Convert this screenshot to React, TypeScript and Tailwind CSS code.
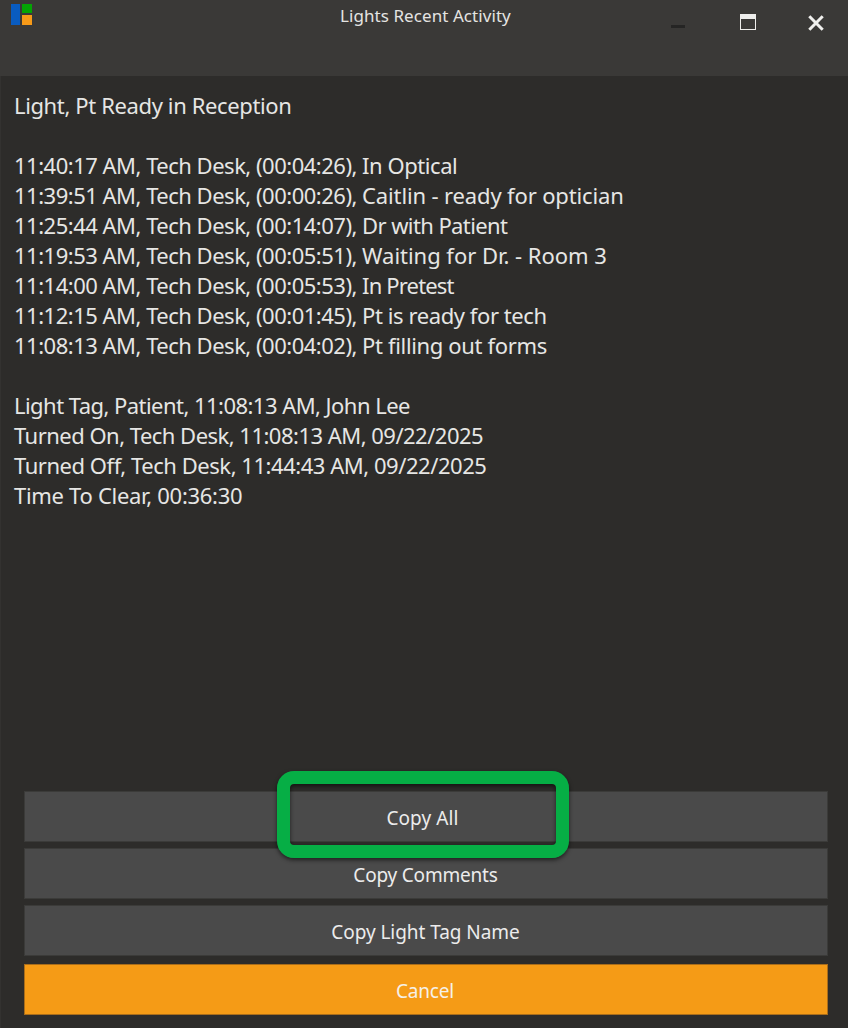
import React from 'react';

const events = [
  { time: '11:40:17 AM', elapsed: '00:04:26', note: 'In Optical', spacing: 'tracking-[-0.45px]' },
  { time: '11:39:51 AM', elapsed: '00:00:26', note: 'Caitlin - ready for optician', spacing: 'tracking-[-0.14px]' },
  { time: '11:25:44 AM', elapsed: '00:14:07', note: 'Dr with Patient', spacing: 'tracking-[-0.6px]' },
  { time: '11:19:53 AM', elapsed: '00:05:51', note: 'Waiting for Dr. - Room 3', spacing: 'tracking-[-0.03px]' },
  { time: '11:14:00 AM', elapsed: '00:05:53', note: 'In Pretest', spacing: 'tracking-[-0.85px]' },
  { time: '11:12:15 AM', elapsed: '00:01:45', note: 'Pt is ready for tech', spacing: 'tracking-[-0.42px]' },
  { time: '11:08:13 AM', elapsed: '00:04:02', note: 'Pt filling out forms', spacing: 'tracking-[-0.35px]' },
];

const summary = [
  { text: 'Light Tag, Patient, 11:08:13 AM, John Lee', spacing: 'tracking-[-0.54px]' },
  { text: 'Turned On, Tech Desk, 11:08:13 AM, 09/22/2025', spacing: 'tracking-[-0.52px]' },
  { text: 'Turned Off, Tech Desk, 11:44:43 AM, 09/22/2025', spacing: 'tracking-[-0.46px]' },
  { text: 'Time To Clear, 00:36:30', spacing: 'tracking-[-0.3px]' },
];

const buttonClass =
  'flex h-[51px] w-full items-center justify-center border border-[#3b3b39] bg-[#4a4a4a] pt-[3px] text-[19px] text-[#ececec]';

const TitleBar: React.FC = () => (
  <header className="flex h-[76px] items-start bg-[#3a3937]">
    <div className="ml-[11px] mt-1 grid h-[21px] w-[21px] grid-cols-[9px_10px] grid-rows-[9px_10px] gap-[2px]">
      <div className="row-span-2 bg-[#095cc0]" />
      <div className="bg-[#04a404]" />
      <div className="bg-[#f79a18]" />
    </div>
    <h1 className="ml-[308px] mt-1 whitespace-nowrap text-[17px] leading-6 tracking-[0.07px] text-[#e4e4e2]">
      Lights Recent Activity
    </h1>
    <div className="ml-auto mr-[24px] mt-[14px] flex">
      <button aria-label="Minimize" className="mr-[55px] mt-[11px] h-[3px] w-[14px] bg-[#252524]" />
      <button aria-label="Maximize" className="mr-[52px] h-4 w-4 border border-t-[5px] border-[#eeeeec]" />
      <button aria-label="Close" className="mt-px h-4 w-4">
        <svg viewBox="0 0 16 16" className="h-4 w-4" fill="none" stroke="#f0f0ee" strokeWidth="3">
          <path d="M1.3 1.3 14.7 14.7M14.7 1.3 1.3 14.7" />
        </svg>
      </button>
    </div>
  </header>
);

const App: React.FC = () => {
  return (
    <div className="flex h-[1028px] w-[848px] flex-col overflow-hidden bg-[#2d2c2a] font-['Noto_Sans',sans-serif]">
      <TitleBar />

      <main className="flex-1 whitespace-pre border-l border-[#333230] pl-[13px] pt-[14px] text-[22px] leading-[30px] text-[#e6e6e4]">
        <p className="mb-[30px] tracking-[-0.37px]">Light, Pt Ready in Reception</p>
        {events.map((event) => (
          <p key={event.time} className="tracking-[-0.5px]">
            {`${event.time}, Tech Desk, (${event.elapsed}), `}
            <span className={event.spacing}>{event.note}</span>
          </p>
        ))}
        <div className="mt-[30px]">
          {summary.map((line) => (
            <p key={line.text} className={line.spacing}>
              {line.text}
            </p>
          ))}
        </div>
      </main>

      <footer className="flex flex-col border-l border-[#333230] pb-[13px] pl-[23px] pr-5">
        <div className="relative">
          <button className={buttonClass}>
            <span className="pr-[7px] tracking-[0.1px]">Copy All</span>
          </button>
          <div className="pointer-events-none absolute -top-5 left-[253px] h-[87px] w-[292px] rounded-[17px] border-[13px] border-[#06ae45] shadow-[0_2px_4px_rgba(0,0,0,0.6),inset_0_2px_4px_rgba(0,0,0,0.6)]" />
        </div>
        <button className={`${buttonClass} mt-[6px]`}>
          <span className="pr-px tracking-[-0.2px]">Copy Comments</span>
        </button>
        <button className={`${buttonClass} mt-[6px]`}>
          <span className="pr-px tracking-[-0.05px]">Copy Light Tag Name</span>
        </button>
        <button className="mt-2 flex h-[51px] w-full items-center justify-center border border-[#a96d1b] bg-[#f59b16] pt-[3px] text-[19px] text-[#f6f1e8]">
          <span className="pr-[2px] tracking-[-0.2px]">Cancel</span>
        </button>
      </footer>
    </div>
  );
};

export default App;
